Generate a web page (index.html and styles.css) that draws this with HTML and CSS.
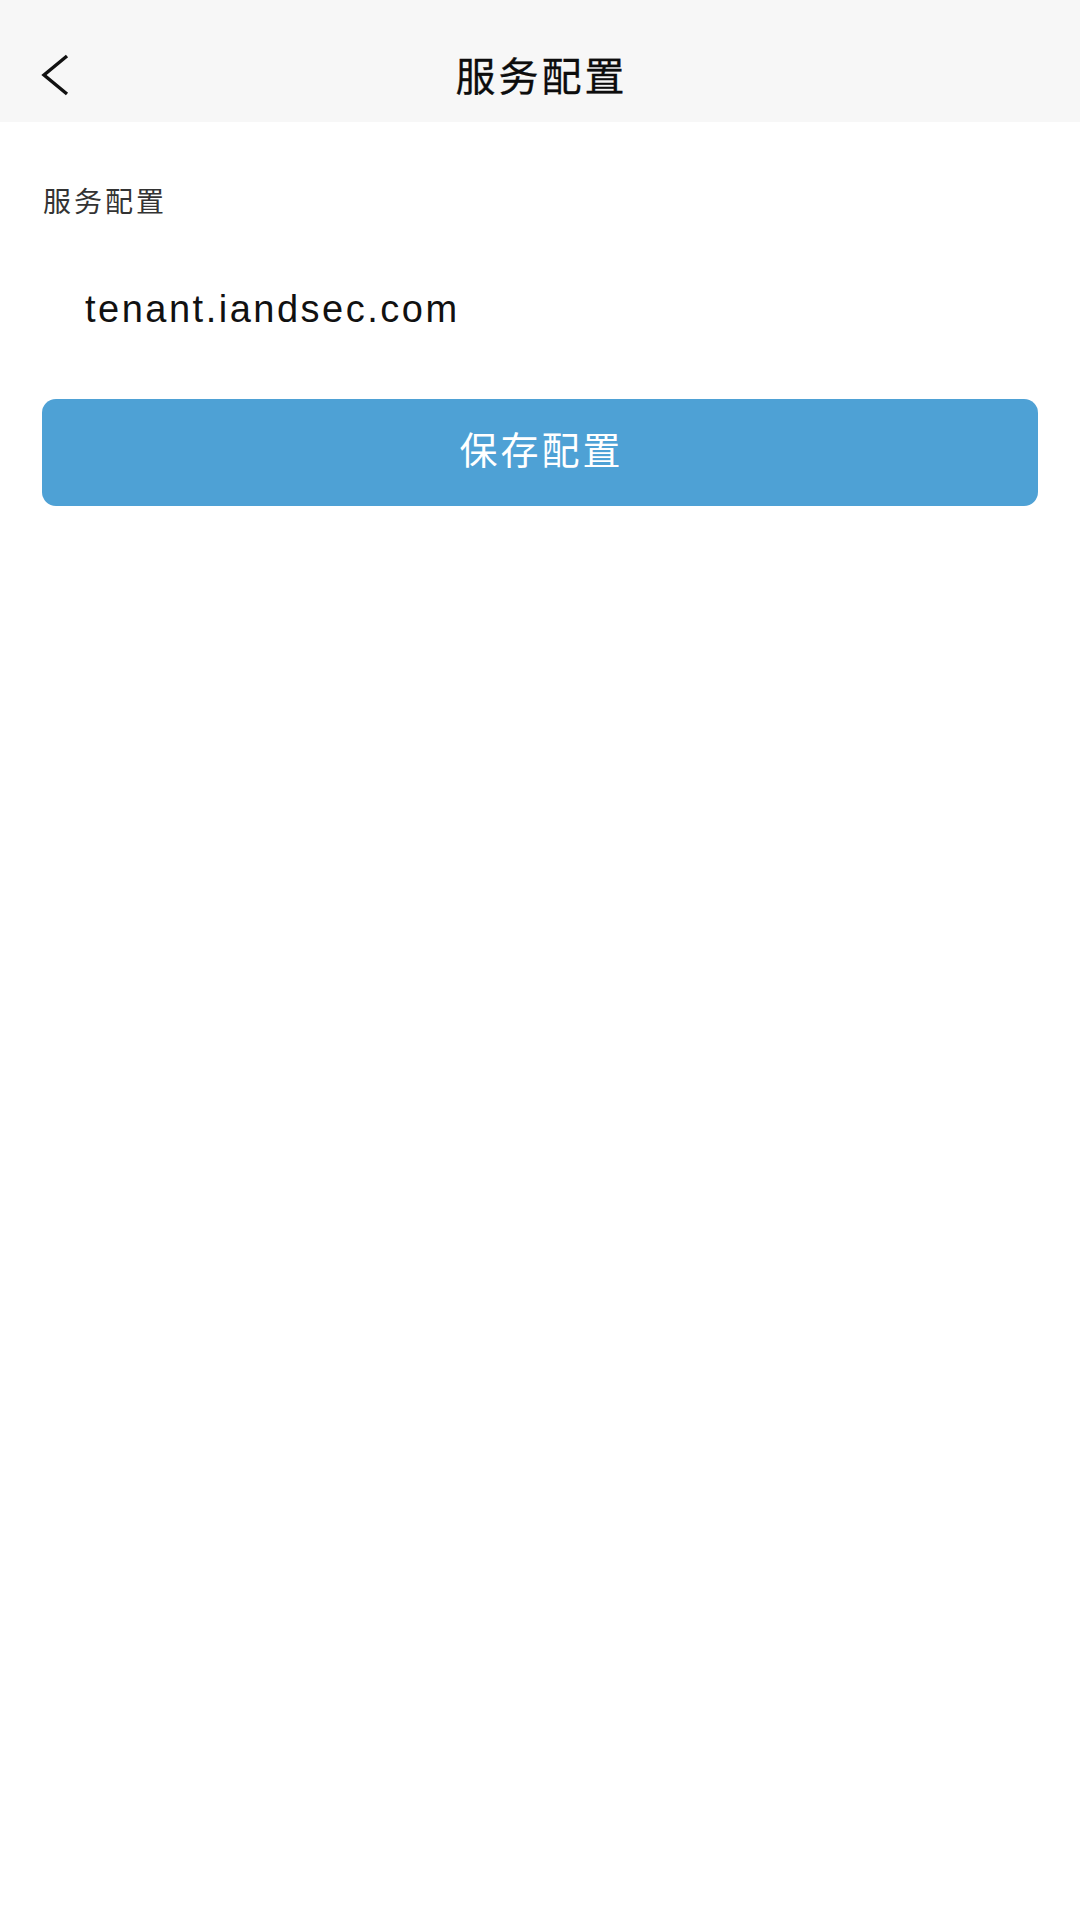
FILE: index.html
```html
<!DOCTYPE html>
<html lang="zh-CN">
<head>
<meta charset="utf-8">
<title>服务配置</title>
<link rel="stylesheet" href="styles.css">
</head>
<body>
<header class="nav">
  <div class="nav-left">
    <svg class="back" width="30" height="44" viewBox="0 0 30 44" aria-hidden="true">
      <polyline points="26,3 3,22 26,41" fill="none" stroke="#111" stroke-width="3.4" stroke-linecap="butt" stroke-linejoin="miter"/>
    </svg>
  </div>
  <h1 class="nav-title">服务配置</h1>
  <div class="nav-right"></div>
</header>
<main class="content">
  <div class="label">服务配置</div>
  <div class="value">tenant.iandsec.com</div>
  <button class="save">保存配置</button>
</main>
</body>
</html>
```
FILE: styles.css
```css
html, body {
  margin: 0;
  padding: 0;
  background: #ffffff;
}
body {
  width: 1080px;
  min-height: 1920px;
  font-family: "Noto Sans CJK SC", "Noto Sans", sans-serif;
}
.nav {
  box-sizing: border-box;
  height: 122px;
  padding-top: 26px;
  background: #f7f7f7;
  display: grid;
  grid-template-columns: 1fr auto 1fr;
  align-items: center;
}
.nav-left {
  display: flex;
  align-items: center;
  padding-left: 41px;
  padding-top: 2px;
}
.back {
  display: block;
}
.nav-title {
  margin: 0;
  font-size: 40px;
  font-weight: 400;
  letter-spacing: 3px;
  color: #0d0d0d;
  line-height: 50px;
  padding-left: 3px;
  -webkit-text-stroke: 0.3px #0d0d0d;
}
.content {
  padding: 0 42px;
  display: flex;
  flex-direction: column;
}
.label {
  margin-top: 58px;
  font-size: 28px;
  line-height: 40px;
  letter-spacing: 3px;
  color: #333;
  padding-left: 1px;
}
.value {
  margin-top: 59px;
  padding-left: 43px;
  font-family: "Liberation Sans", Arial, sans-serif;
  font-size: 38px;
  letter-spacing: 2.5px;
  line-height: 60px;
  color: #111;
}
.save {
  margin-top: 60px;
  height: 107px;
  border: none;
  border-radius: 14px;
  background: #4ea1d5;
  color: #ffffff;
  font-family: "Noto Sans CJK SC", "Noto Sans", sans-serif;
  font-size: 38px;
  letter-spacing: 3px;
  padding: 0 0 10px 3px;
}
```
